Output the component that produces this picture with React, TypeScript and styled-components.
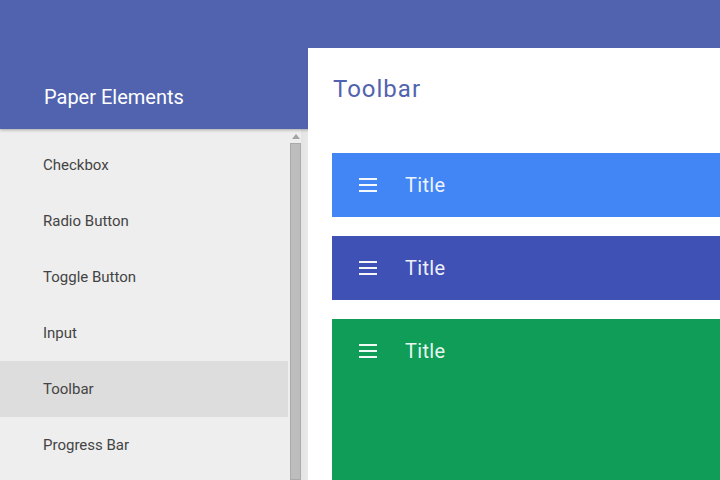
import React from "react";
import styled, { createGlobalStyle } from "styled-components";

const Global = createGlobalStyle`
  html, body { margin: 0; padding: 0; }
  body {
    width: 720px; height: 480px; overflow: hidden;
    background: #eeeeee;
    font-family: Roboto, "Noto Sans", sans-serif;
    -webkit-font-smoothing: antialiased;
  }
`;

const Page = styled.div`
  display: grid;
  grid-template-columns: 308px 1fr;
  grid-template-rows: 48px 81px 1fr;
  width: 720px;
  height: 480px;
  overflow: hidden;
`;

const Header = styled.header`
  grid-column: 1 / 3;
  grid-row: 1 / 3;
  background: #5163ae;
  box-shadow: 0 1px 3px rgba(0, 0, 0, 0.3);
  display: flex;
  align-items: flex-end;
  padding: 0 0 20px 44px;
  z-index: 1;
`;

const Brand = styled.h1`
  margin: 0;
  font-size: 20px;
  font-weight: 400;
  line-height: 24px;
  color: #ffffff;
`;

const Sidebar = styled.nav`
  grid-column: 1;
  grid-row: 3;
  display: flex;
  min-height: 0;
  overflow: hidden;
  background: #eeeeee;
`;

const List = styled.ul`
  list-style: none;
  margin: 0;
  padding: 8px 0 0;
  flex: 1;
`;

const Item = styled.li<{ $active?: boolean }>`
  height: 56px;
  display: flex;
  align-items: center;
  padding-left: 43px;
  font-size: 15px;
  color: #444444;
  background: ${(p) => (p.$active ? "#dddddd" : "transparent")};
`;

const Scrollbar = styled.div`
  width: 20px;
  display: flex;
  flex-direction: column;
  align-items: flex-start;
  padding-left: 2px;
  box-sizing: border-box;
  background: linear-gradient(to right, #eeeeee 0 13px, #e4e4e4 13px, #e8e8e8 100%);
`;

const Arrow = styled.div`
  width: 0;
  height: 0;
  margin: 5px 0 4px 2px;
  border-left: 4px solid transparent;
  border-right: 4px solid transparent;
  border-bottom: 5px solid #a3a3a3;
`;

const Thumb = styled.div`
  width: 11px;
  flex: 1;
  box-sizing: border-box;
  background: #bdbdbd;
  border: 1px solid #aaaaaa;
`;

const Card = styled.main`
  grid-column: 2;
  grid-row: 2 / 4;
  background: #ffffff;
  z-index: 2;
  padding: 25px 0 0 24px;
  display: flex;
  flex-direction: column;
  min-width: 0;
`;

const PageTitle = styled.h2`
  margin: 0 0 48px 1px;
  font-size: 24px;
  font-weight: 400;
  line-height: 32px;
  letter-spacing: 1px;
  color: #5163ae;
`;

const Bars = styled.div`
  display: flex;
  flex-direction: column;
  gap: 19px;
`;

const Toolbar = styled.div<{ $bg: string; $tall?: boolean }>`
  background: ${(p) => p.$bg};
  height: ${(p) => (p.$tall ? "200px" : "64px")};
  display: flex;
  align-items: flex-start;
  padding: 0 16px;
  color: #ffffff;
`;

const ToolbarRow = styled.div`
  height: 64px;
  display: flex;
  align-items: center;
`;

const IconButton = styled.div`
  width: 40px;
  height: 40px;
  padding: 8px;
  box-sizing: border-box;
  display: flex;
  align-items: center;
  justify-content: center;
`;

const BarTitle = styled.span`
  margin-left: 17px;
  font-size: 20px;
  letter-spacing: 0.3px;
  color: rgba(255, 255, 255, 0.92);
`;

const MenuIcon = () => (
  <svg width="24" height="24" viewBox="0 0 24 24">
    <path d="M3 6h18M3 12h18M3 18h18" stroke="rgba(255,255,255,0.95)" strokeWidth="2" fill="none" />
  </svg>
);

const items = ["Checkbox", "Radio Button", "Toggle Button", "Input", "Toolbar", "Progress Bar"];

const bars: { bg: string; tall?: boolean }[] = [
  { bg: "#4285f4" },
  { bg: "#3f51b5" },
  { bg: "#0f9d58", tall: true },
];

export default function App() {
  return (
    <>
      <Global />
      <Page>
        <Header>
          <Brand>Paper Elements</Brand>
        </Header>
        <Sidebar>
          <List>
            {items.map((t) => (
              <Item key={t} $active={t === "Toolbar"}>
                {t}
              </Item>
            ))}
          </List>
          <Scrollbar>
            <Arrow />
            <Thumb />
          </Scrollbar>
        </Sidebar>
        <Card>
          <PageTitle>Toolbar</PageTitle>
          <Bars>
            {bars.map((b, i) => (
              <Toolbar key={i} $bg={b.bg} $tall={b.tall}>
                <ToolbarRow>
                  <IconButton>
                    <MenuIcon />
                  </IconButton>
                  <BarTitle>Title</BarTitle>
                </ToolbarRow>
              </Toolbar>
            ))}
          </Bars>
        </Card>
      </Page>
    </>
  );
}
